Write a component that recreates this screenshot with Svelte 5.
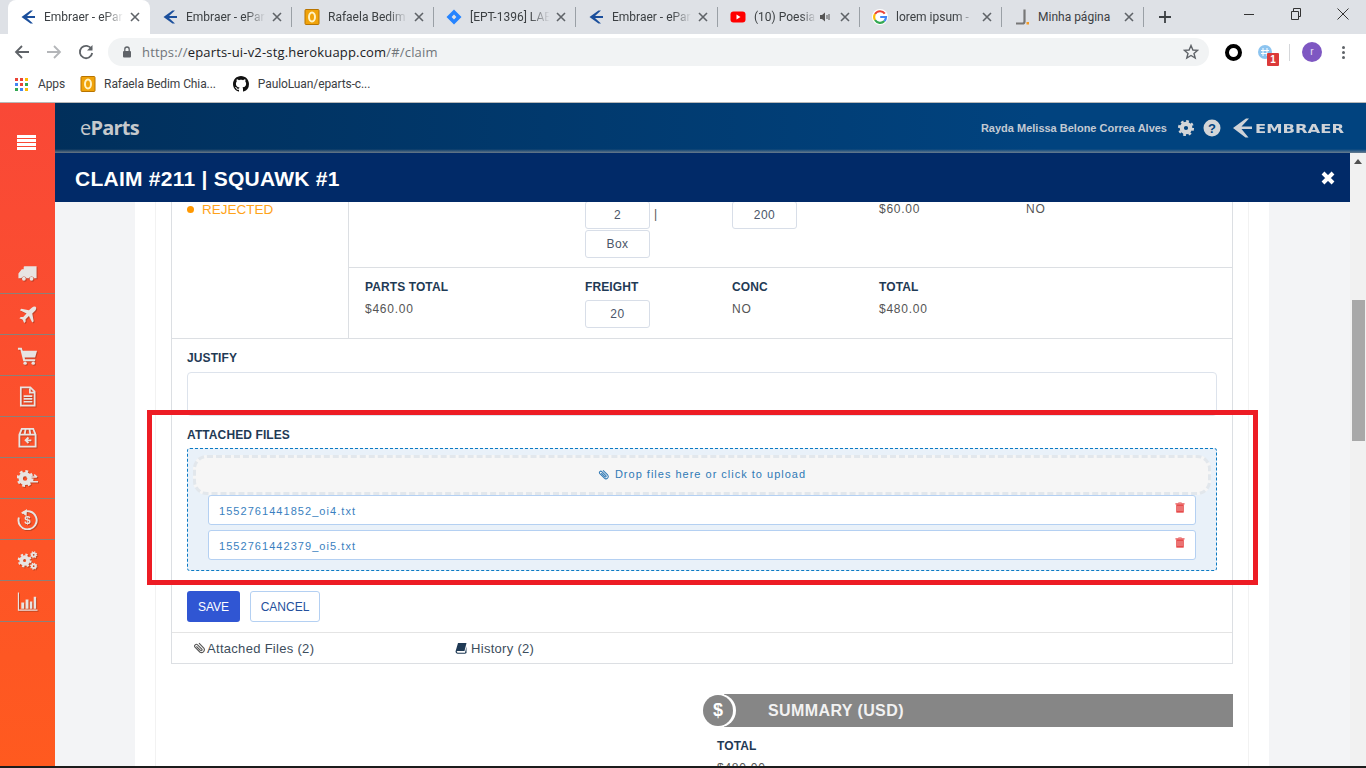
<script>
    const tabs = [
        { icon: "embraer", title: "Embraer - ePar", active: true },
        { icon: "embraer", title: "Embraer - ePar" },
        { icon: "outlook", title: "Rafaela Bedim" },
        { icon: "jira", title: "[EPT-1396] LAE" },
        { icon: "embraer", title: "Embraer - ePar" },
        { icon: "youtube", title: "(10) Poesia", sound: true },
        { icon: "google", title: "lorem ipsum -" },
        { icon: "j", title: "Minha página", fits: true }
    ];
    const nav = ["truck", "plane", "cart", "doc", "box", "gearswap", "refund", "gears", "chart"];
    const files = ["1552761441852_oi4.txt", "1552761442379_oi5.txt"];
</script>

{#snippet favicon(kind)}
    <svg class="fav" viewBox="0 0 16 16">
        {#if kind === "embraer"}
            <path d="M13 1.5 L7 7 H15 V9 H7 L13 14.5 H10.5 L1.5 8 L10.5 1.5Z" fill="#1b4f9c" />
        {:else if kind === "outlook"}
            <rect x="1" y="0.5" width="14" height="15" rx="1" fill="#f0a30a" stroke="#b87400" />
            <ellipse cx="8" cy="8" rx="3" ry="4.6" fill="none" stroke="#fff2c4" stroke-width="2" />
        {:else if kind === "jira"}
            <path d="M8 0.5 L15.5 8 L8 15.5 L0.5 8Z M8 5.6 L5.6 8 L8 10.4 L10.4 8Z" fill="#2684ff" fill-rule="evenodd" />
        {:else if kind === "youtube"}
            <rect x="0.5" y="2.5" width="15" height="11" rx="3" fill="#f00" />
            <path d="M6.5 5.6 L10.5 8 L6.5 10.4Z" fill="#fff" />
        {:else if kind === "google"}
            <circle cx="8" cy="8" r="8" fill="#fff" />
            <path d="M12.8 4.6 A6 6 0 0 0 3 5" fill="none" stroke="#ea4335" stroke-width="2.2" />
            <path d="M3 5 A6 6 0 0 0 3 11" fill="none" stroke="#fbbc05" stroke-width="2.2" />
            <path d="M3 11 A6 6 0 0 0 12.4 12" fill="none" stroke="#34a853" stroke-width="2.2" />
            <path d="M12.4 12 A6 6 0 0 0 14 8 H8.2" fill="none" stroke="#4285f4" stroke-width="2.2" />
        {:else}
            <path d="M10.5 0.5 V12.5 Q10.5 14.5 8.5 14.5 H2" fill="none" stroke="#777" stroke-width="2.2" />
            <rect x="12.5" y="13" width="2.5" height="2.5" fill="#f59a23" />
        {/if}
    </svg>
{/snippet}

{#snippet gear(cx, cy, r, w)}
    <circle {cx} {cy} r={r} fill="none" stroke="currentColor" stroke-width={w} />
    <circle {cx} {cy} r={r + w * 0.62} fill="none" stroke="currentColor" stroke-width={w * 0.6}
        stroke-dasharray={(2 * Math.PI * (r + w * 0.62)) / 16} />
{/snippet}

{#snippet navicon(kind)}
    <svg class="navicon" viewBox="0 0 22 22">
        {#if kind === "truck"}
            <path d="M7 4.5 Q7 3.5 8 3.5 H20.5 V16 H18 A3 3 0 0 0 12.5 16 H10 A3 3 0 0 0 4.5 16 H1.5 V11 L5 6.5 H7Z" fill="currentColor" />
            <circle cx="7.2" cy="16.5" r="2" fill="currentColor" />
            <circle cx="15.2" cy="16.5" r="2" fill="currentColor" />
        {:else if kind === "plane"}
            <path d="M19.5 3 Q21 4.5 19 7 L16 10 L17.5 18 L16 19.5 L12.5 12.5 L9 16 V18.5 L7.5 20 L6 16.5 L2.5 15 L4 13.5 H6.5 L10 10 L3 6.5 L4.5 5 L12.5 6.5 L15.5 3.8 Q18 2 19.5 3Z" fill="currentColor" />
        {:else if kind === "cart"}
            <path d="M1 3 H5 L6 6 H21 L19 13 H8 L8.4 15 H19 V17 H6.6 L3.6 5 H1Z" fill="currentColor" />
            <circle cx="8.5" cy="19" r="1.8" fill="currentColor" />
            <circle cx="17" cy="19" r="1.8" fill="currentColor" />
        {:else if kind === "doc"}
            <path d="M4 1.5 H14 L18.5 6 V20.5 H4Z M13.5 2.5 V7 H18" fill="none" stroke="currentColor" stroke-width="1.8" />
            <path d="M7 10.5 H16 M7 13.5 H16 M7 16.5 H16" stroke="currentColor" stroke-width="1.8" />
        {:else if kind === "box"}
            <path d="M2.5 8 L5 2 H17 L19.5 8 V20.5 H2.5Z M2.5 8 H19.5 M9 2 L8 8 M13 2 L14 8" fill="none" stroke="currentColor" stroke-width="1.9" />
            <path d="M15 14 H9 M12 11 L9 14 L12 17" fill="none" stroke="currentColor" stroke-width="1.9" />
        {:else if kind === "gearswap"}
            {@render gear(8.5, 11, 4.6, 4.6)}
            <path d="M10 9.5 H20 M18 7 L21 9.5 M22 14.5 H12 M14 12.5 L11 14.5 L14 17" fill="none" stroke="currentColor" stroke-width="1.6" />
        {:else if kind === "refund"}
            <path d="M5 4.5 A9.5 9.5 0 1 1 2 9" fill="none" stroke="currentColor" stroke-width="2" />
            <path d="M10.5 0 L5 4 L10 7.5Z" fill="currentColor" />
            <text x="11" y="16" class="refund">$</text>
        {:else if kind === "gears"}
            {@render gear(8, 11, 3.6, 4)}
            {@render gear(17.5, 5, 1.9, 2)}
            {@render gear(17.5, 17, 1.9, 2)}
        {:else}
            <path d="M1.5 1.5 V20 H21.5" fill="none" stroke="currentColor" stroke-width="1.2" />
            <path d="M4.5 12 H7.5 V18.5 H4.5Z M9 9 H12 V18.5 H9Z M13.5 11 H16 V18.5 H13.5Z M17.5 6 H20 V18.5 H17.5Z" fill="currentColor" />
        {/if}
    </svg>
{/snippet}

{#snippet trash()}
    <svg class="trash" viewBox="0 0 10 11">
        <path d="M3.6 1.4 V0.5 H6.4 V1.4" fill="none" stroke="#eda3a3" stroke-width="1" />
        <path d="M0.4 1.9 H9.6" stroke="#e33232" stroke-width="1" />
        <path d="M1.3 2.4 H8.7 V10.6 H1.3Z" fill="#e33232" />
        <path d="M3 3.6 V9.4 M5 3.6 V9.4 M7 3.6 V9.4" stroke="#f4b6b6" stroke-width="1" />
    </svg>
{/snippet}

<div class="screen">
    <div class="tabstrip">
        {#each tabs as tab}
            <div class="tab" class:active={tab.active}>
                {@render favicon(tab.icon)}
                <span class="tabtitle" class:fits={tab.fits}>{tab.title}</span>
                {#if tab.sound}
                    <svg class="speaker" viewBox="0 0 12 12">
                        <path d="M1 4 H3 L6 1.5 V10.5 L3 8 H1Z" fill="#555" />
                        <path d="M8 4 V8 M10 3 V9" stroke="#555" />
                    </svg>
                {/if}
                <svg class="tabclose" viewBox="0 0 10 10">
                    <path d="M1 1 L9 9 M9 1 L1 9" stroke="#5f6368" stroke-width="1.6" />
                </svg>
            </div>
        {/each}
        <svg class="plus" viewBox="0 0 12 12">
            <path d="M6 0 V12 M0 6 H12" stroke="#3c4043" stroke-width="1.8" />
        </svg>
        <div class="winbtns">
            <svg viewBox="0 0 12 12"><path d="M1 6.5 H11" stroke="#333" /></svg>
            <svg viewBox="0 0 12 12"><path d="M1.5 3.5 H8.5 V11.5 H1.5Z M3.5 3 V0.5 H10.5 V8.5 H9" fill="none" stroke="#333" /></svg>
            <svg viewBox="0 0 12 12"><path d="M0.5 0.5 L11.5 11.5 M11.5 0.5 L0.5 11.5" stroke="#333" /></svg>
        </div>
    </div>

    <div class="toolbar">
        <svg class="navbtn" viewBox="0 0 16 16"><path d="M15 8 H2 M8 2 L2 8 L8 14" fill="none" stroke="#5f6368" stroke-width="1.8" /></svg>
        <svg class="navbtn" viewBox="0 0 16 16"><path d="M1 8 H14 M8 2 L14 8 L8 14" fill="none" stroke="#b4b6b9" stroke-width="1.8" /></svg>
        <svg class="navbtn" viewBox="0 0 16 16"><path d="M13.5 5 A6.2 6.2 0 1 0 14.2 9" fill="none" stroke="#5f6368" stroke-width="1.8" /><path d="M14.5 1 V6.5 H9Z" fill="#5f6368" /></svg>
        <div class="omnibox">
            <svg class="lock" viewBox="0 0 10 12">
                <path d="M2.8 5 V3.2 A2.2 2.2 0 0 1 7.2 3.2 V5" fill="none" stroke="#5f6368" stroke-width="1.3" />
                <rect x="1" y="5" width="8" height="6.5" rx="1" fill="#5f6368" />
            </svg>
            <span class="url"><span class="dim">https://</span>eparts-ui-v2-stg.herokuapp.com<span class="dim">/#/claim</span></span>
            <svg class="star" viewBox="0 0 16 16">
                <path d="M8 1.5 L9.9 6 L14.7 6.3 L11 9.4 L12.2 14.1 L8 11.5 L3.8 14.1 L5 9.4 L1.3 6.3 L6.1 6Z" fill="none" stroke="#5f6368" stroke-width="1.4" />
            </svg>
        </div>
        <div class="exticons">
            <span class="ring"></span>
            <span class="globe">
                <svg class="globe-mark" viewBox="0 0 14 14">
                    <path d="M5 3 V11 M9 3 V11 M3 5.5 H11 M3 8.5 H11" stroke="#fff" stroke-width="1" fill="none" />
                </svg>
                <span class="badge">1</span>
            </span>
            <span class="vsep"></span>
            <span class="avatar">r</span>
            <span class="dots"><i></i><i></i><i></i></span>
        </div>
    </div>

    <div class="bookmarks">
        <svg class="apps" viewBox="0 0 13 13">
            {#each [0, 5, 10] as y, r}
                {#each [0, 5, 10] as x, c}
                    <rect {x} {y} width="3" height="3" fill={[["#ea4335", "#ea4335", "#fbbc05"], ["#4285f4", "#ea4335", "#34a853"], ["#34a853", "#4285f4", "#fbbc05"]][r][c]} />
                {/each}
            {/each}
        </svg>
        <span class="bm apps-label">Apps</span>
        {@render favicon("outlook")}
        <span class="bm rafaela">Rafaela Bedim Chia...</span>
        <svg class="fav" viewBox="0 0 16 16">
            <path fill="#111" d="M8 0C3.58 0 0 3.58 0 8c0 3.54 2.29 6.53 5.47 7.59.4.07.55-.17.55-.38 0-.19-.01-.82-.01-1.49-2.01.37-2.53-.49-2.69-.94-.09-.23-.48-.94-.82-1.13-.28-.15-.68-.52-.01-.53.63-.01 1.08.58 1.23.82.72 1.21 1.87.87 2.33.66.07-.52.28-.87.51-1.07-1.78-.2-3.64-.89-3.64-3.95 0-.87.31-1.59.82-2.15-.08-.2-.36-1.02.08-2.12 0 0 .67-.21 2.2.82.64-.18 1.32-.27 2-.27s1.36.09 2 .27c1.53-1.04 2.2-.82 2.2-.82.44 1.1.16 1.92.08 2.12.51.56.82 1.27.82 2.15 0 3.07-1.87 3.75-3.65 3.95.29.25.54.73.54 1.48 0 1.07-.01 1.93-.01 2.2 0 .21.15.46.55.38A8.01 8.01 0 0 0 16 8c0-4.42-3.58-8-8-8z" />
        </svg>
        <span class="bm">PauloLuan/eparts-c...</span>
    </div>

    <div class="app">
        <aside class="sidebar">
            <div class="burger"><i></i><i></i><i></i><i></i></div>
            <nav>
                {#each nav as item}
                    <div class="navitem">{@render navicon(item)}</div>
                {/each}
            </nav>
        </aside>

        <div class="main">
            <header class="topbar">
                <span class="brand"><span class="brand-e">e</span>Parts</span>
                <span class="username">Rayda Melissa Belone Correa Alves</span>
                <svg class="topicon" viewBox="0 0 18 18">{@render gear(9, 9, 4.2, 4.2)}</svg>
                <svg class="topicon help" viewBox="0 0 18 18">
                    <circle cx="9" cy="9" r="8.5" fill="currentColor" />
                    <text x="9" y="13.6" class="helpmark">?</text>
                </svg>
                <svg class="logomark" viewBox="0 0 20 20">
                    <path d="M14 0.5 H17 L9.5 8.5 H20 V11 H9.5 L16.5 19.5 H13.5 L1 10Z" fill="#cfd3d8" />
                </svg>
                <span class="wordmark">EMBRAER</span>
            </header>

            <div class="workspace">
                <div class="modal">
                    <div class="modal-title">
                        <h1>CLAIM #211 | SQUAWK #1</h1>
                        <svg class="modal-close" viewBox="0 0 14 14">
                            <path d="M2 2 L12 12 M12 2 L2 12" stroke="#fff" stroke-width="4" />
                        </svg>
                    </div>
                    <div class="modal-body">
                        <div class="sheet">
                            <div class="panel">
                                <div class="card">
                                    <div class="claim">
                                        <div class="status"><i class="dot"></i>REJECTED</div>
                                        <div class="claim-rows">
                                            <div class="grid row-a">
                                                <div></div>
                                                <div class="stack">
                                                    <div class="qty"><span class="box">2</span><span class="pipe">|</span></div>
                                                    <span class="box">Box</span>
                                                </div>
                                                <div><span class="box">200</span></div>
                                                <div class="val">$60.00</div>
                                                <div class="val">NO</div>
                                            </div>
                                            <div class="grid row-b">
                                                <div><div class="lbl">PARTS TOTAL</div><div class="val">$460.00</div></div>
                                                <div><div class="lbl">FREIGHT</div><span class="box freight">20</span></div>
                                                <div><div class="lbl">CONC</div><div class="val">NO</div></div>
                                                <div><div class="lbl">TOTAL</div><div class="val">$480.00</div></div>
                                            </div>
                                        </div>
                                    </div>

                                    <div class="form">
                                        <div class="lbl">JUSTIFY</div>
                                        <div class="textarea"></div>

                                        <div class="lbl attached">ATTACHED FILES</div>
                                        <div class="dropzone">
                                            <div class="dropmsg">
                                                <svg class="clip" viewBox="0 0 12 12">
                                                    <path d="M10.5 5.5 L5.5 10.5 Q3.6 12 2 10.4 Q0.4 8.6 2 7 L7 2 Q8.2 1 9.2 2 Q10.2 3.1 9.2 4.2 L4.8 8.6 Q4 9.2 3.5 8.6 Q3 8 3.6 7.4 L7.5 3.6" fill="none" stroke="#2f79b5" stroke-width="1.1" transform="rotate(-90 6 6)" />
                                                </svg>
                                                Drop files here or click to upload
                                            </div>
                                            {#each files as f}
                                                <div class="file">
                                                    <span class="fname">{f}</span>
                                                    {@render trash()}
                                                </div>
                                            {/each}
                                        </div>

                                        <div class="actions">
                                            <button class="save">SAVE</button>
                                            <button class="cancel">CANCEL</button>
                                        </div>
                                    </div>

                                    <div class="cardtabs">
                                        <span class="ctab first">
                                            <svg class="ctab-ico" viewBox="0 0 12 12">
                                                <path d="M10.8 6 L6 10.8 Q4 12.2 2.2 10.4 Q0.6 8.6 2 6.8 L6.8 2 Q8 1 9.2 2.2 Q10.2 3.4 9.2 4.6 L5 8.8 Q4.2 9.4 3.6 8.8 Q3 8.2 3.6 7.4 L7.6 3.4" fill="none" stroke="#555" stroke-width="1.1" transform="rotate(-90 6 6)" />
                                            </svg>Attached Files (2)
                                        </span>
                                        <span class="ctab">
                                            <svg class="ctab-ico book" viewBox="0 0 12 12">
                                                <path d="M3 1 H11.5 L9.5 9 H2.5 Q1.5 9 1.8 10 Q2 10.8 3 10.8 H10 L11.5 4.5 V11 L10 11.8 H2.5 Q0.5 11.5 0.5 9.5Z" fill="#1f3a55" />
                                            </svg>History (2)
                                        </span>
                                    </div>
                                </div>

                                <div class="summary">
                                    <div class="summary-bar">
                                        <span class="coin">$</span>
                                        <span class="summary-title">SUMMARY (USD)</span>
                                    </div>
                                    <div class="lbl sum-lbl">TOTAL</div>
                                    <div class="val sum-val">$480.00</div>
                                </div>
                            </div>
                        </div>
                    </div>
                </div>
                <div class="scrollbar">
                    <svg class="scroll-up" viewBox="0 0 8 5"><path d="M4 0 L8 5 H0Z" fill="#505050" /></svg>
                    <div class="thumb"></div>
                </div>
            </div>
        </div>
    </div>

    <div class="highlight"></div>
    <div class="taskbar-edge"></div>
</div>

<style>
    :global(body) {
        margin: 0;
        overflow: hidden;
        font-family: "Liberation Sans", Arial, sans-serif;
    }
    .screen {
        position: relative;
        width: 1366px;
        height: 768px;
        overflow: hidden;
        display: flex;
        flex-direction: column;
        background: #fff;
    }

    /* browser chrome */
    .tabstrip {
        height: 34px;
        flex: none;
        background: #dee1e6;
        display: flex;
        align-items: center;
        padding-left: 8px;
    }
    .tab {
        position: relative;
        width: 142px;
        height: 34px;
        box-sizing: border-box;
        padding: 0 10px 0 12px;
        display: flex;
        align-items: center;
        font: 12px Roboto, sans-serif;
        color: #3c4043;
    }
    .tab.active {
        background: #fff;
        border-radius: 8px 8px 0 0;
    }
    .tab:not(.active):not(:first-child)::after {
        content: "";
        position: absolute;
        right: 0;
        top: 7px;
        height: 20px;
        width: 1px;
        background: #9aa0a6;
    }
    .tab:nth-child(2)::after {
        content: none;
    }
    .fav {
        width: 16px;
        height: 16px;
        flex: none;
    }
    .tabtitle {
        flex: 1;
        min-width: 0;
        margin-left: 8px;
        white-space: nowrap;
        overflow: hidden;
        -webkit-mask-image: linear-gradient(to right, #000 72%, transparent 96%);
        mask-image: linear-gradient(to right, #000 72%, transparent 96%);
    }
    .tabtitle.fits {
        -webkit-mask-image: none;
        mask-image: none;
    }
    .speaker {
        width: 12px;
        height: 12px;
        flex: none;
        margin: 0 6px 0 0;
    }
    .tabclose {
        width: 10px;
        height: 10px;
        flex: none;
        margin-left: 3px;
    }
    .plus {
        width: 12px;
        height: 12px;
        margin-left: 15px;
    }
    .winbtns {
        margin-left: auto;
        margin-right: 17px;
        display: flex;
        gap: 35px;
        margin-top: -6px;
    }
    .winbtns svg {
        width: 12px;
        height: 12px;
    }
    .toolbar {
        height: 34px;
        flex: none;
        display: flex;
        align-items: center;
        padding: 2px 0 0 14px;
        box-sizing: border-box;
    }
    .navbtn {
        width: 16px;
        height: 16px;
        margin-right: 16px;
        flex: none;
    }
    .omnibox {
        margin-left: -2px;
        width: 1101px;
        height: 28px;
        border-radius: 14px;
        background: #f1f3f4;
        display: flex;
        align-items: center;
        padding: 0 10px 0 14px;
        box-sizing: border-box;
        flex: none;
    }
    .lock {
        width: 10px;
        height: 12px;
        margin-right: 10px;
    }
    .url {
        font: 13px "Open Sans", sans-serif;
        letter-spacing: 0.17px;
        color: #202124;
    }
    .dim {
        color: #70757a;
    }
    .star {
        margin-left: auto;
        width: 16px;
        height: 16px;
    }
    .exticons {
        display: flex;
        align-items: center;
        margin-left: 16px;
    }
    .ring {
        width: 9px;
        height: 9px;
        border: 4px solid #000;
        border-radius: 50%;
        margin-right: 16px;
    }
    .globe {
        position: relative;
        width: 14px;
        height: 14px;
        border-radius: 50%;
        background: #8cc4f0;
        margin-right: 17px;
    }
    .globe-mark {
        display: block;
        width: 14px;
        height: 14px;
    }
    .badge {
        position: absolute;
        left: 9px;
        top: 8px;
        width: 12px;
        height: 13px;
        border-radius: 1px;
        background: #db3a3a;
        color: #fff;
        font: bold 10px/13px "Liberation Sans", sans-serif;
        text-align: center;
    }
    .vsep {
        width: 1px;
        height: 17px;
        background: #d5d7da;
        margin-right: 12px;
    }
    .avatar {
        width: 20px;
        height: 20px;
        border-radius: 50%;
        background: #7e57c2;
        color: #e8e0f5;
        font: 10px/20px "Liberation Sans", sans-serif;
        text-align: center;
        margin-right: 20px;
    }
    .dots {
        display: flex;
        flex-direction: column;
        gap: 2px;
    }
    .dots i {
        width: 3px;
        height: 3px;
        border-radius: 50%;
        background: #5f6368;
    }
    .bookmarks {
        height: 35px;
        flex: none;
        box-sizing: border-box;
        border-bottom: 1px solid #b8b8b8;
        display: flex;
        align-items: center;
        padding: 0 0 2px 15px;
    }
    .apps {
        width: 13px;
        height: 13px;
    }
    .bm {
        font: 12px Roboto, sans-serif;
        letter-spacing: -0.1px;
        color: #3c4043;
        margin-left: 9px;
    }
    .apps-label {
        margin-left: 10px;
        margin-right: 15px;
    }
    .rafaela {
        margin-left: 8px;
        margin-right: 17px;
    }

    /* app shell */
    .app {
        flex: 1;
        min-height: 0;
        display: flex;
    }
    .sidebar {
        width: 55px;
        flex: none;
        background: linear-gradient(#f94837, #ff5a1f);
    }
    .burger {
        height: 150px;
        box-sizing: border-box;
        padding: 32px 0 0 17px;
        display: flex;
        flex-direction: column;
        gap: 1px;
    }
    .burger i {
        display: block;
        width: 19px;
        height: 3px;
        background: #fff;
    }
    .navitem {
        height: 41px;
        box-sizing: border-box;
        border-bottom: 1px solid #8d8078;
        display: flex;
        align-items: center;
        justify-content: center;
    }
    .navicon {
        width: 21px;
        height: 21px;
        color: #e8e4e2;
        filter: drop-shadow(1px 1px 0 rgba(90, 40, 20, 0.35));
    }
    .refund {
        font: bold 12px "Liberation Sans", sans-serif;
        fill: currentColor;
        text-anchor: middle;
    }
    .main {
        flex: 1;
        min-width: 0;
        display: flex;
        flex-direction: column;
    }
    .topbar {
        height: 50px;
        flex: none;
        box-sizing: border-box;
        padding: 0 21px 0 25px;
        display: flex;
        align-items: center;
        background:
            linear-gradient(to bottom, transparent 46px, rgba(150, 150, 150, 0.7) 50px),
            linear-gradient(to right, #012f5b, #01437f 75%, #01437f);
    }
    .brand {
        font: bold 20px "Open Sans", sans-serif;
        color: #c6c9cc;
        letter-spacing: -0.8px;
        margin-top: -2px;
    }
    .brand-e {
        font-weight: 400;
    }
    .username {
        margin-left: auto;
        font: bold 11px "Liberation Sans", sans-serif;
        color: #c3cad3;
    }
    .topicon {
        width: 18px;
        height: 18px;
        color: #d3d5d8;
        margin-left: 10px;
    }
    .topicon.help {
        margin-left: 8px;
    }
    .helpmark {
        font: bold 13px "Liberation Sans", sans-serif;
        fill: #01437f;
        text-anchor: middle;
    }
    .logomark {
        width: 20px;
        height: 20px;
        margin-left: 11px;
        flex: none;
    }
    .wordmark {
        width: 90px;
        margin-left: 3px;
        font: bold 13px "DejaVu Sans", sans-serif;
        color: #cfd3d8;
        transform: scaleX(1.26);
        transform-origin: left center;
        white-space: nowrap;
    }
    .workspace {
        flex: 1;
        min-height: 0;
        display: flex;
    }
    .modal {
        flex: 1;
        min-width: 0;
        display: flex;
        flex-direction: column;
    }
    .modal-title {
        height: 49px;
        flex: none;
        box-sizing: border-box;
        background: #012a68;
        display: flex;
        align-items: center;
        justify-content: space-between;
        padding: 3px 15px 0 20px;
    }
    h1 {
        margin: 0;
        font: bold 21px "Liberation Sans", sans-serif;
        letter-spacing: 0.25px;
        color: #fff;
    }
    .modal-close {
        width: 14px;
        height: 14px;
        margin-top: -3px;
    }
    .modal-body {
        flex: 1;
        min-height: 0;
        overflow: hidden;
        background: #f3f4f6;
        padding: 0 81px 0 80px;
    }
    .sheet {
        background: #fff;
        padding: 0 20px;
        height: 700px;
    }
    .panel {
        border: solid #f2f2f2;
        border-width: 0 1px;
        padding: 0 15px;
        height: 100%;
    }
    .scrollbar {
        position: relative;
        width: 16px;
        flex: none;
        background: #f1f1f1;
    }
    .scroll-up {
        position: absolute;
        left: 4px;
        top: 6px;
        width: 8px;
        height: 5px;
    }
    .thumb {
        position: absolute;
        left: 2px;
        right: 1px;
        top: 147px;
        height: 141px;
        background: #a8a8a8;
    }

    /* claim card */
    .card {
        border: 1px solid #dcdfe3;
        border-top: 0;
        margin-top: -22px;
    }
    .claim {
        display: flex;
        border-bottom: 1px solid #dcdfe3;
    }
    .status {
        width: 176px;
        flex: none;
        box-sizing: border-box;
        padding: 22px 0 0 15px;
        display: flex;
        align-items: flex-start;
        font-size: 13.5px;
        line-height: 15px;
        color: #ffa31a;
    }
    .dot {
        width: 7px;
        height: 7px;
        border-radius: 50%;
        background: #ff9800;
        margin: 4px 8px 0 0;
    }
    .claim-rows {
        flex: 1;
        border-left: 1px solid #dcdfe3;
    }
    .grid {
        display: grid;
        grid-template-columns: 220px 147px 147px 147px 1fr;
        padding-left: 16px;
        font-size: 12px;
    }
    .row-a {
        height: 88px;
        box-sizing: border-box;
        border-bottom: 1px solid #dcdfe3;
        padding-top: 21px;
    }
    .row-a .val {
        line-height: 15px;
        padding-top: 1px;
    }
    .row-b {
        height: 70px;
        box-sizing: border-box;
        padding-top: 12px;
    }
    .stack {
        display: flex;
        flex-direction: column;
        gap: 1px;
    }
    .qty {
        display: flex;
    }
    .pipe {
        margin-left: 4px;
        color: #555;
        line-height: 27px;
    }
    .box {
        display: block;
        width: 65px;
        height: 28px;
        box-sizing: border-box;
        border: 1px solid #d8dee8;
        border-radius: 3px;
        text-align: center;
        font-size: 12px;
        line-height: 27px;
        letter-spacing: 0.5px;
        color: #4a5568;
    }
    .freight {
        margin-top: 6px;
    }
    .lbl {
        font-size: 12px;
        line-height: 14px;
        font-weight: bold;
        letter-spacing: 0.1px;
        color: #1f3a55;
    }
    .val {
        font-size: 12px;
        line-height: 14px;
        letter-spacing: 0.75px;
        color: #555;
    }
    .lbl + .val {
        margin-top: 8px;
    }
    .form {
        padding: 12px 15px 0;
    }
    .textarea {
        height: 44px;
        margin-top: 7px;
        box-sizing: border-box;
        border: 1px solid #dde3ec;
        border-radius: 4px;
    }
    .attached {
        margin-top: 12px;
    }
    .dropzone {
        margin-top: 6px;
        height: 123px;
        box-sizing: border-box;
        border: 1px dashed #0a7ac4;
        border-radius: 3px;
        background: #e9f1f9;
        padding: 6px 5px 0;
    }
    .dropmsg {
        height: 40px;
        box-sizing: border-box;
        border: 3px dashed #e2e7ec;
        border-radius: 14px;
        background: #f6f6f6;
        display: flex;
        align-items: center;
        justify-content: center;
        padding-bottom: 2px;
        font-size: 11px;
        letter-spacing: 1px;
        color: #2f79b5;
    }
    .clip {
        width: 11px;
        height: 11px;
        margin-right: 6px;
    }
    .file {
        margin: 0 15px 5px;
        height: 30px;
        box-sizing: border-box;
        border: 1px solid #b4d0f2;
        border-radius: 3px;
        background: #fff;
        padding: 0 10px;
        display: flex;
        align-items: center;
        justify-content: space-between;
        font-size: 11px;
        letter-spacing: 1.05px;
        color: #3a7fc0;
    }
    .fname {
        padding-top: 1px;
    }
    .trash {
        width: 10px;
        height: 11px;
        margin-top: -5px;
    }
    .actions {
        display: flex;
        gap: 10px;
        margin-top: 20px;
        padding-bottom: 10px;
    }
    button {
        height: 31px;
        border-radius: 3px;
        font: 12px "Liberation Sans", sans-serif;
        padding: 0;
    }
    .save {
        width: 53px;
        border: 0;
        background: #3056d3;
        color: #fff;
    }
    .cancel {
        width: 70px;
        border: 1px solid #b4d0f2;
        background: #fff;
        color: #24509c;
    }
    .cardtabs {
        height: 31px;
        box-sizing: border-box;
        border-top: 1px solid #e4e4e4;
        display: flex;
        align-items: center;
        font-size: 13px;
        letter-spacing: 0.3px;
        color: #3d4d5c;
    }
    .ctab {
        display: flex;
        align-items: center;
    }
    .ctab.first {
        width: 262px;
        padding-left: 21px;
    }
    .ctab-ico {
        width: 12px;
        height: 12px;
        margin-right: 2px;
    }
    .book {
        margin-right: 4px;
    }

    /* summary */
    .summary {
        margin: 30px 0 0 532px;
    }
    .summary-bar {
        position: relative;
        height: 33px;
        margin-left: 21px;
        background: #868686;
        display: flex;
        align-items: center;
        padding-left: 44px;
    }
    .coin {
        position: absolute;
        left: -21px;
        top: 1px;
        width: 30px;
        height: 31px;
        box-sizing: border-box;
        border-radius: 50%;
        background: #868686;
        box-shadow: 2px 0 0 1px #fff;
        color: #fff;
        font: bold 18px/31px "Liberation Sans", sans-serif;
        text-align: center;
    }
    .summary-title {
        font: bold 16px "Liberation Sans", sans-serif;
        letter-spacing: 0.4px;
        color: #f2f2f2;
    }
    .sum-lbl {
        margin: 12px 0 0 14px;
    }
    .sum-val {
        margin-left: 14px;
    }

    /* overlays */
    .highlight {
        position: absolute;
        left: 147px;
        top: 410px;
        width: 1111px;
        height: 175px;
        box-sizing: border-box;
        border: 5px solid #ed1c24;
    }
    .taskbar-edge {
        position: absolute;
        left: 0;
        right: 0;
        bottom: 0;
        height: 2px;
        background: #1c1c1c;
    }
</style>
